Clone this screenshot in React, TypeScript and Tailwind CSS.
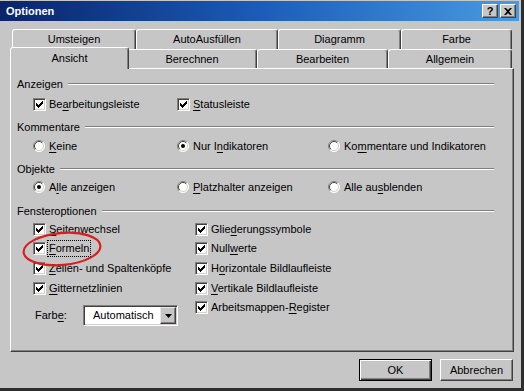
import React from "react";

function U({ t, u }: { t: string; u: number }) {
  if (u < 0) return <>{t}</>;
  return (
    <>
      {t.slice(0, u)}
      <span className="underline underline-offset-[2px]">{t[u]}</span>
      {t.slice(u + 1)}
    </>
  );
}

const CHECK = [
  [6], [5, 6], [0, 4, 5, 6], [0, 1, 3, 4, 5], [0, 1, 2, 3, 4], [1, 2, 3], [2],
];

function CheckBox() {
  return (
    <span className="relative inline-block w-[13px] h-[13px] shrink-0 bg-white border border-t-[#808080] border-l-[#808080] border-r-white border-b-white shadow-[inset_1px_1px_0_#404040,inset_-1px_-1px_0_#d4d0c8]">
      <svg className="absolute left-[2px] top-[2px]" width="7" height="7" viewBox="0 0 7 7" shapeRendering="crispEdges">
        {CHECK.map((row, y) => row.map((x) => <rect key={`${x}-${y}`} x={x} y={y} width="1" height="1" fill="#000" />))}
      </svg>
    </span>
  );
}

function Radio({ on }: { on?: boolean }) {
  return (
    <svg width="12" height="12" viewBox="0 0 12 12" className="shrink-0">
      <circle cx="6" cy="6" r="5.5" fill="#fff" />
      <path d="M2.1 9.9 A5.5 5.5 0 0 1 9.9 2.1" stroke="#808080" fill="none" />
      <path d="M9.9 2.1 A5.5 5.5 0 0 1 2.1 9.9" stroke="#fff" fill="none" />
      <path d="M2.8 9.2 A4.5 4.5 0 0 1 9.2 2.8" stroke="#404040" fill="none" />
      <path d="M9.2 2.8 A4.5 4.5 0 0 1 2.8 9.2" stroke="#d4d0c8" fill="none" />
      {on && <circle cx="6" cy="6" r="2" fill="#000" />}
    </svg>
  );
}

function CheckItem({ t, u, className = "", focus = false }: { t: string; u: number; className?: string; focus?: boolean }) {
  return (
    <div className={"flex items-center h-[16px] whitespace-nowrap " + className}>
      <CheckBox />
      <span className={focus ? "ml-[3px] outline-1 outline-dotted outline-black outline-offset-[1px]" : "ml-[3px]"}>
        <U t={t} u={u} />
      </span>
    </div>
  );
}

function RadioItem({ t, u, on, className = "" }: { t: string; u: number; on?: boolean; className?: string }) {
  return (
    <div className={"flex items-center h-[16px] whitespace-nowrap " + className}>
      <Radio on={on} />
      <span className="ml-[4px]">
        <U t={t} u={u} />
      </span>
    </div>
  );
}

function Group({ t, className = "" }: { t: string; className?: string }) {
  return (
    <div className={"flex items-center h-[16px] w-[477px] " + className}>
      <span>{t}</span>
      <div className="flex-1 ml-[5px] h-[2px] border-t border-b border-t-[#808080] border-b-white" />
    </div>
  );
}

function Tab({ label, w, active }: { label: string; w: string; active?: boolean }) {
  if (active) {
    return (
      <div className={"relative z-10 -mx-[2px] -mt-[2px] h-[22px] flex items-center justify-center bg-[#c6c6c6] border-l border-t border-r border-l-white border-t-white border-r-[#404040] rounded-t-[3px] shadow-[inset_-1px_0_0_#808080] " + w}>
        {label}
      </div>
    );
  }
  return (
    <div className={"flex items-center justify-center border-l border-t border-r border-l-white border-t-white border-r-[#404040] rounded-t-[3px] shadow-[inset_-1px_0_0_#808080] " + w}>
      {label}
    </div>
  );
}

function CapBtn({ children }: { children: React.ReactNode }) {
  return (
    <div className="w-[16px] h-[14px] bg-[#c6c6c6] flex items-center justify-center border border-t-white border-l-white border-r-[#404040] border-b-[#404040] shadow-[inset_-1px_-1px_0_#808080]">
      {children}
    </div>
  );
}

function Button({ children, def }: { children: React.ReactNode; def?: boolean }) {
  return def ? (
    <div className="w-[73px] h-[22px] border border-black flex items-center justify-center shadow-[inset_1px_1px_0_#fff,inset_-1px_-1px_0_#404040,inset_-2px_-2px_0_#808080]">
      {children}
    </div>
  ) : (
    <div className="w-[73px] h-[22px] border border-t-white border-l-white border-r-[#404040] border-b-[#404040] flex items-center justify-center shadow-[inset_-1px_-1px_0_#808080]">
      {children}
    </div>
  );
}

export default function App() {
  return (
    <div className="relative w-[524px] h-[391px] bg-[#c6c6c6] border-r-[3px] border-b-[3px] border-r-[#2e2e2e] border-b-[#2e2e2e] font-['Liberation_Sans',Arial,sans-serif] text-[11px] text-black leading-[13px] overflow-hidden">
      {/* title bar */}
      <div className="mt-[1px] mr-[2px] h-[20px] flex items-center bg-linear-to-r from-[#0a246a] via-[#1c5cb8] to-[#4a9ae0] pl-[6px] pr-[3px]">
        <span className="text-white font-bold flex-1">Optionen</span>
        <div className="flex gap-[2px]">
          <CapBtn>
            <span className="font-bold text-[11px] leading-none">?</span>
          </CapBtn>
          <CapBtn>
            <svg width="8" height="7" viewBox="0 0 8 7">
              <path d="M0 0h2l2 2 2-2h2L5 3.5 8 7H6L4 5 2 7H0l3-3.5z" fill="#000" />
            </svg>
          </CapBtn>
        </div>
      </div>

      <div className="ml-[10px] mt-[8px] w-[504px]">
        <div className="flex h-[20px] pl-[2px]">
          <Tab label="Umsteigen" w="w-[124px]" />
          <Tab label="AutoAusfüllen" w="w-[142px]" />
          <Tab label="Diagramm" w="w-[123px]" />
          <Tab label="Farbe" w="w-[111px]" />
        </div>
        <div className="flex h-[19px] pl-[2px]">
          <Tab label="Ansicht" w="w-[119px]" active />
          <Tab label="Berechnen" w="w-[130px]" />
          <Tab label="Bearbeiten" w="w-[131px]" />
          <Tab label="Allgemein" w="w-[124px]" />
        </div>

        {/* panel */}
        <div className="h-[284px] border border-t-white border-l-white border-r-[#404040] border-b-[#404040] shadow-[inset_-1px_-1px_0_#808080] pl-[6px] pt-[7px]">
          <Group t="Anzeigen" />
          <div className="flex ml-[16px] mt-[4px]">
            <CheckItem t="Bearbeitungsleiste" u={2} className="w-[144px]" />
            <CheckItem t="Statusleiste" u={0} />
          </div>

          <Group t="Kommentare" className="mt-[7px]" />
          <div className="flex ml-[16px] mt-[3px]">
            <RadioItem t="Keine" u={0} className="w-[144px]" />
            <RadioItem t="Nur Indikatoren" u={5} on className="w-[151px]" />
            <RadioItem t="Kommentare und Indikatoren" u={2} />
          </div>

          <Group t="Objekte" className="mt-[7px]" />
          <div className="flex ml-[16px] mt-[2px]">
            <RadioItem t="Alle anzeigen" u={1} on className="w-[144px]" />
            <RadioItem t="Platzhalter anzeigen" u={0} className="w-[151px]" />
            <RadioItem t="Alle ausblenden" u={7} />
          </div>

          <Group t="Fensteroptionen" className="mt-[8px]" />
          <div className="flex ml-[16px] mt-[2px]">
            <div className="flex flex-col w-[162px]">
              <CheckItem t="Seitenwechsel" u={0} />
              <CheckItem t="Formeln" u={0} focus className="mt-[3px]" />
              <CheckItem t="Zeilen- und Spaltenköpfe" u={0} className="mt-[4px]" />
              <CheckItem t="Gitternetzlinien" u={0} className="mt-[4px]" />
              <div className="flex items-center mt-[9px] h-[21px]">
                <span className="ml-[2px] w-[48px]">
                  <U t="Farbe:" u={4} />
                </span>
                <div className="flex w-[95px] h-[21px] bg-white border border-t-[#808080] border-l-[#808080] border-r-white border-b-white shadow-[inset_1px_1px_0_#404040,inset_-1px_-1px_0_#d4d0c8] p-[1px]">
                  <span className="flex-1 flex items-center pl-[8px]">Automatisch</span>
                  <div className="w-[16px] h-full bg-[#c6c6c6] flex items-center justify-center border border-t-[#e8e8e8] border-l-[#e8e8e8] border-r-[#404040] border-b-[#404040] shadow-[inset_-1px_-1px_0_#808080]">
                    <svg width="7" height="4" viewBox="0 0 7 4">
                      <path d="M0 0h7L3.5 4z" fill="#000" />
                    </svg>
                  </div>
                </div>
              </div>
            </div>
            <div className="flex flex-col">
              <CheckItem t="Gliederungssymbole" u={4} />
              <CheckItem t="Nullwerte" u={4} className="mt-[3px]" />
              <CheckItem t="Horizontale Bildlaufleiste" u={1} className="mt-[4px]" />
              <CheckItem t="Vertikale Bildlaufleiste" u={0} className="mt-[4px]" />
              <CheckItem t="Arbeitsmappen-Register" u={14} className="mt-[3px]" />
            </div>
          </div>
        </div>

        <div className="flex justify-end gap-[8px] mt-[7px] pr-[1px]">
          <Button def>OK</Button>
          <Button>Abbrechen</Button>
        </div>
      </div>

      {/* red annotation ellipse */}
      <svg className="absolute left-[20px] top-[229px]" width="84" height="40" viewBox="0 0 84 40">
        <ellipse cx="42" cy="20" rx="38.5" ry="16" fill="none" stroke="#d81e1e" strokeWidth="2.2" transform="rotate(-5 42 20)" />
      </svg>
    </div>
  );
}
